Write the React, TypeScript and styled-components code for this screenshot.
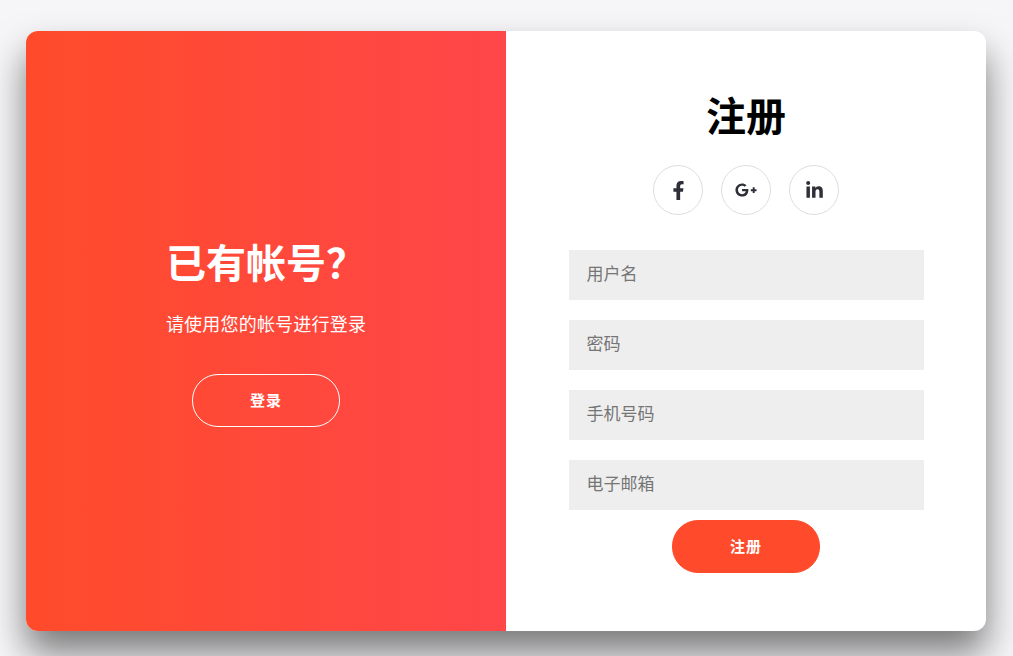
import React from 'react';
import styled, { createGlobalStyle } from 'styled-components';
import { FaFacebookF, FaGooglePlusG, FaLinkedinIn } from 'react-icons/fa';

const GlobalStyle = createGlobalStyle`
  * {
    box-sizing: border-box;
  }

  body {
    margin: 0;
    background: #f6f5f7;
    font-family: "Liberation Sans", "Noto Sans CJK SC", sans-serif;
  }
`;

const Page = styled.div`
  height: 656px;
  padding: 31px 1px 0 0;
  display: flex;
  justify-content: center;
  overflow: hidden;
`;

const Card = styled.div`
  width: 960px;
  height: 600px;
  display: grid;
  grid-template-columns: 1fr 1fr;
  background: #fff;
  border-radius: 12px;
  overflow: hidden;
  box-shadow: 0 22px 36px rgba(0, 0, 0, 0.5);
`;

const Overlay = styled.section`
  display: flex;
  flex-direction: column;
  align-items: center;
  justify-content: center;
  color: #fff;
  background: linear-gradient(to right, #ff4b2b, #ff4649);
`;

const Heading = styled.h1`
  margin: 0;
  font-size: 40px;
  line-height: 58px;
  font-weight: 700;
`;

const Lead = styled.p`
  margin: 17px 0 34px;
  font-size: 18px;
  line-height: 30px;
  letter-spacing: 0.2px;
  font-weight: 400;
`;

const Button = styled.button<{ $ghost?: boolean }>`
  width: 148px;
  height: 53px;
  padding: 0 0 2px;
  border-radius: 26px;
  border: 1px solid ${(props) => (props.$ghost ? '#fff' : '#ff4b2b')};
  background: ${(props) => (props.$ghost ? 'transparent' : '#ff4b2b')};
  color: #fff;
  font-family: inherit;
  font-size: 15px;
  font-weight: 700;
  letter-spacing: 1px;
`;

const Form = styled.form`
  display: flex;
  flex-direction: column;
  align-items: center;
  padding: 57px 62px 0;
`;

const Title = styled(Heading)`
  color: #000;
`;

const Socials = styled.div`
  display: flex;
  gap: 18px;
  margin: 19px 0 35px;
`;

const Social = styled.a`
  width: 50px;
  height: 50px;
  display: flex;
  align-items: center;
  justify-content: center;
  border: 1px solid #ddd;
  border-radius: 50%;
  color: #2e2f38;
`;

const Fields = styled.div`
  width: 355px;
  display: flex;
  flex-direction: column;
  gap: 20px;
  margin-bottom: 10px;
`;

const Input = styled.input`
  width: 100%;
  height: 50px;
  padding: 0 18px;
  border: none;
  outline: none;
  background: #eee;
  font-family: inherit;
  font-size: 17px;
`;

const App = (): JSX.Element => {
  return (
    <Page>
      <GlobalStyle />
      <Card>
        <Overlay>
          <Heading>已有帐号？</Heading>
          <Lead>请使用您的帐号进行登录</Lead>
          <Button type="button" $ghost>
            登录
          </Button>
        </Overlay>
        <Form>
          <Title>注册</Title>
          <Socials>
            <Social>
              <FaFacebookF size={19} />
            </Social>
            <Social>
              <FaGooglePlusG size={22} />
            </Social>
            <Social>
              <FaLinkedinIn size={19} />
            </Social>
          </Socials>
          <Fields>
            <Input placeholder="用户名" />
            <Input placeholder="密码" />
            <Input placeholder="手机号码" />
            <Input placeholder="电子邮箱" />
          </Fields>
          <Button type="button">注册</Button>
        </Form>
      </Card>
    </Page>
  );
};

export default App;
